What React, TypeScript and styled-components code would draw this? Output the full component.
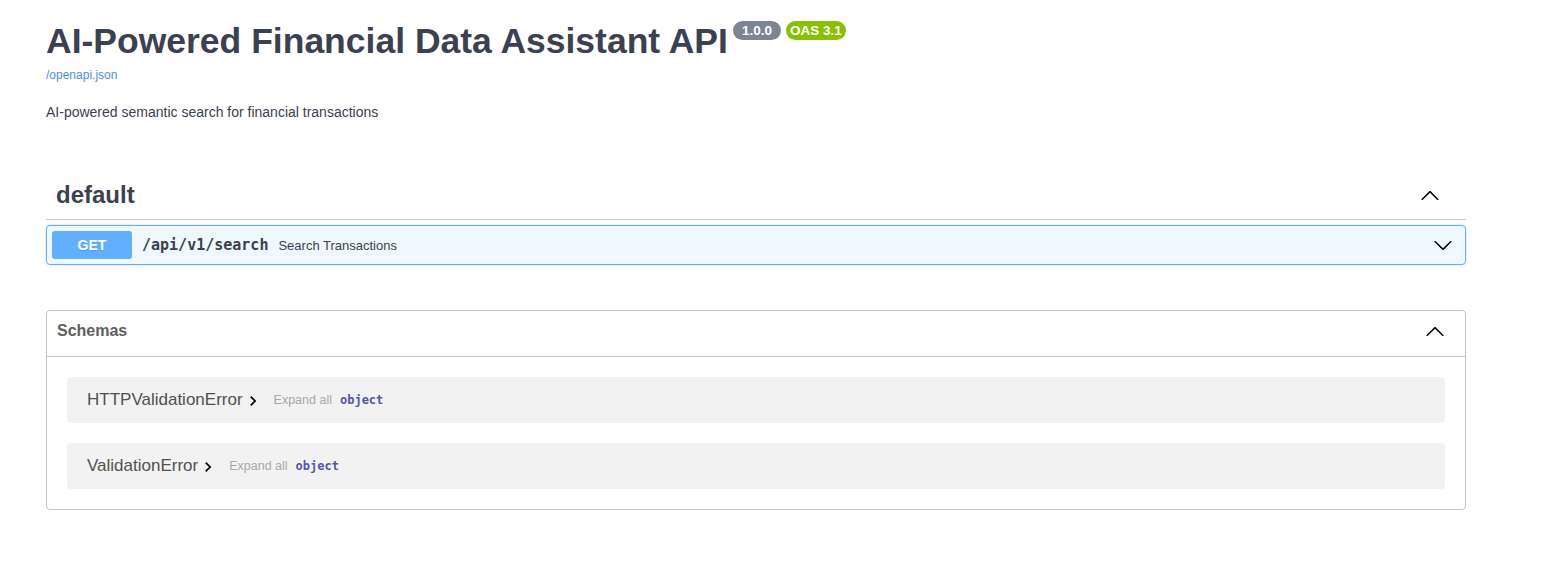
import React from "react";
import styled, { createGlobalStyle } from "styled-components";

const Global = createGlobalStyle`
  html, body { margin: 0; padding: 0; background: #fff; }
  body { font-family: "Liberation Sans", Arial, sans-serif; color: #3b4151; }
  * { box-sizing: border-box; }
`;

const Page = styled.div`
  width: 1420px;
  margin-left: 46px;
  padding-top: 19px;
`;

const Info = styled.div`
  margin-bottom: 51px;
`;

const TitleRow = styled.h2`
  margin: 0;
  padding-top: 2px;
  font-size: 35.5px;
  font-weight: 700;
  color: #3b4151;
  line-height: 41px;
  display: flex;
  align-items: flex-start;
`;

const Badge = styled.span<{ $bg: string; $pad: number }>`
  display: inline-block;
  background: ${(p) => p.$bg};
  color: #fff;
  font-size: 13.5px;
  font-weight: 700;
  line-height: 19px;
  height: 19px;
  padding: 0 ${(p) => p.$pad}px;
  border-radius: 57px;
  margin: 0 0 0 5px;
`;

const SpecLink = styled.a`
  display: inline-block;
  margin-top: 6px;
  font-size: 12px;
  color: #4990e2;
  text-decoration: none;
`;

const Description = styled.p`
  margin: 21px 0 0;
  font-size: 14px;
  color: #3b4151;
`;

const TagHeader = styled.div`
  display: flex;
  align-items: center;
  justify-content: space-between;
  padding: 10px 26px 10px 10px;
  border-bottom: 1px solid rgba(59, 65, 81, 0.3);
  margin-bottom: 5px;
`;

const TagTitle = styled.h3`
  margin: 0;
  font-size: 24px;
  font-weight: 700;
  color: #3b4151;
  line-height: 28px;
`;

const Opblock = styled.div`
  display: flex;
  align-items: center;
  border: 1px solid #61affe;
  background: rgba(97, 175, 254, 0.1);
  border-radius: 4px;
  box-shadow: 0 0 3px rgba(0, 0, 0, 0.19);
  padding: 5px 12px 5px 5px;
  height: 40px;
  margin-bottom: 45px;
`;

const Method = styled.span`
  min-width: 80px;
  padding: 6px 0;
  background: #61affe;
  color: #fff;
  border-radius: 3px;
  font-size: 14px;
  font-weight: 700;
  text-align: center;
  text-shadow: 0 1px 0 rgba(0, 0, 0, 0.1);
  line-height: 16px;
`;

const Path = styled.span`
  padding: 0 10px;
  font-family: "DejaVu Sans Mono", monospace;
  font-weight: 700;
  font-size: 15px;
  color: #3b4151;
`;

const Summary = styled.span`
  flex: 1;
  font-size: 13px;
  color: #3b4151;
`;

const Models = styled.section`
  border: 1px solid rgba(59, 65, 81, 0.3);
  border-radius: 4px;
  padding-bottom: 20px;
`;

const ModelsHeader = styled.div`
  display: flex;
  align-items: center;
  justify-content: space-between;
  padding: 7px 20px 13px 10px;
  height: 46px;
  border-bottom: 1px solid rgba(59, 65, 81, 0.3);
  margin-bottom: 20px;
`;

const ModelsTitle = styled.h4`
  margin: 0;
  font-size: 16px;
  font-weight: 700;
  color: #606060;
`;

const ModelContainer = styled.div`
  display: flex;
  align-items: center;
  height: 46px;
  margin: 0 20px 20px;
  padding: 0 20px;
  background: rgba(0, 0, 0, 0.05);
  border-radius: 4px;
  &:last-child { margin-bottom: 0; }
`;

const ModelName = styled.span`
  font-size: 17px;
  color: #505050;
`;

const Toggle = styled.svg`
  width: 20px;
  height: 20px;
  margin-top: 2px;
`;

const ExpandAll = styled.span`
  font-size: 12.5px;
  color: #a8a8a8;
  margin-left: 11px;
`;

const PropType = styled.span`
  font-family: "DejaVu Sans Mono", monospace;
  font-weight: 700;
  font-size: 12px;
  color: #55a;
  margin-left: 8px;
`;

const Arrow = styled.svg`
  width: 20px;
  height: 20px;
  fill: #000;
`;

const UpArrow = () => (
  <Arrow viewBox="0 0 20 20">
    <path d="M17.418 14.908c.272.268.709.268.979 0s.27-.701 0-.969l-7.908-7.83c-.27-.268-.707-.268-.979 0l-7.908 7.83c-.27.268-.27.701 0 .969.271.268.709.268.979 0L10 7.767l7.418 7.141z" />
  </Arrow>
);

const DownArrow = () => (
  <Arrow viewBox="0 0 20 20">
    <path d="M17.418 6.109c.272-.268.709-.268.979 0s.27.701 0 .969l-7.908 7.83c-.27.268-.707.268-.979 0l-7.908-7.83c-.27-.268-.27-.701 0-.969.271-.268.709-.268.979 0L10 13.25l7.418-7.141z" />
  </Arrow>
);

const ModelToggle = () => (
  <Toggle viewBox="0 0 24 24">
    <path d="M10 6L8.59 7.41 13.17 12l-4.58 4.59L10 18l6-6z" fill="#000" />
  </Toggle>
);

const models = ["HTTPValidationError", "ValidationError"];

export default function App() {
  return (
    <>
      <Global />
      <Page>
        <Info>
          <TitleRow>
            AI-Powered Financial Data Assistant API
            <Badge $bg="#7d8492" $pad={9}>1.0.0</Badge>
            <Badge $bg="#89bf04" $pad={4}>OAS 3.1</Badge>
          </TitleRow>
          <SpecLink href="#">/openapi.json</SpecLink>
          <Description>AI-powered semantic search for financial transactions</Description>
        </Info>

        <TagHeader>
          <TagTitle>default</TagTitle>
          <UpArrow />
        </TagHeader>
        <Opblock>
          <Method>GET</Method>
          <Path>/api/v1/search</Path>
          <Summary>Search Transactions</Summary>
          <DownArrow />
        </Opblock>

        <Models>
          <ModelsHeader>
            <ModelsTitle>Schemas</ModelsTitle>
            <UpArrow />
          </ModelsHeader>
          {models.map((m) => (
            <ModelContainer key={m}>
              <ModelName>{m}</ModelName>
              <ModelToggle />
              <ExpandAll>Expand all</ExpandAll>
              <PropType>object</PropType>
            </ModelContainer>
          ))}
        </Models>
      </Page>
    </>
  );
}
